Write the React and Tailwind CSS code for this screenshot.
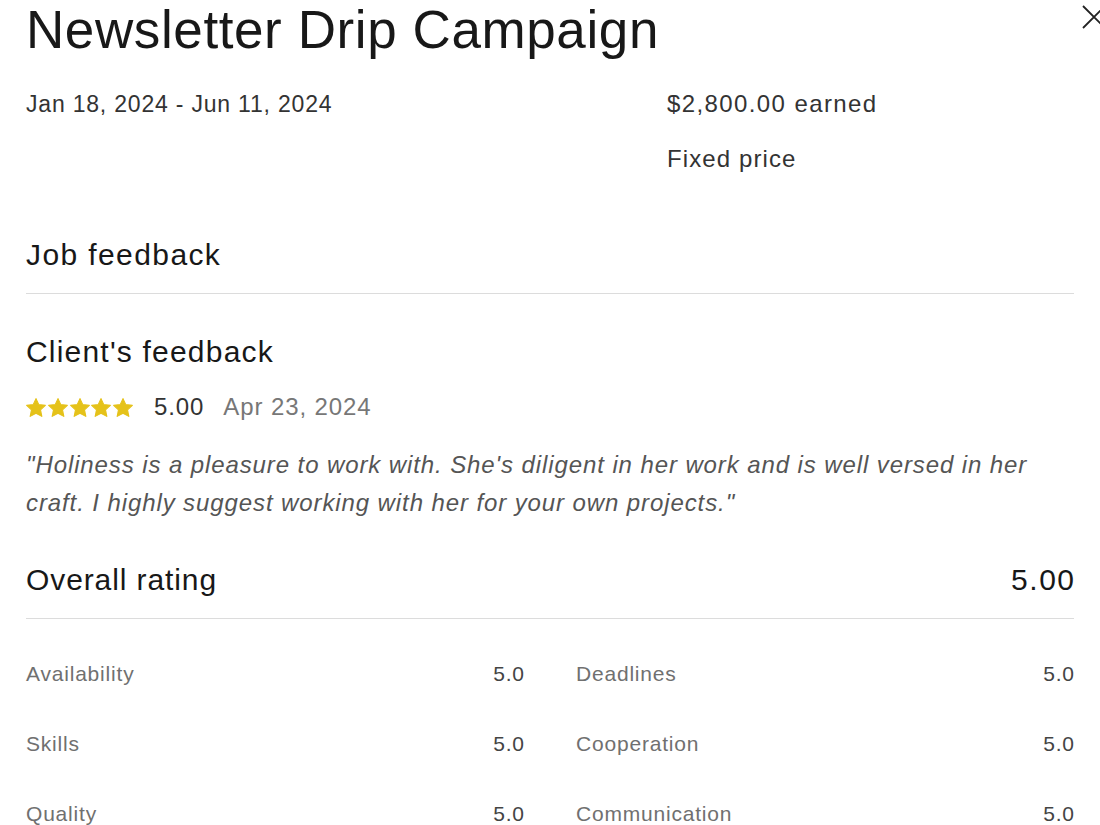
import React from "react";

const Star = () => (
  <svg viewBox="1.2 1.0 21.6 20.4" className="w-[20px] h-[19px]" fill="#e5c21a" stroke="#e5c21a" strokeWidth="1.2" strokeLinejoin="round">
    <path d="M12 1.6l3.05 6.5 7.05.8-5.22 4.85 1.4 7.05L12 17.3l-6.28 3.5 1.4-7.05L1.9 8.9l7.05-.8z" />
  </svg>
);

const rows = [
  ["Availability", "5.0", "Deadlines", "5.0"],
  ["Skills", "5.0", "Cooperation", "5.0"],
  ["Quality", "5.0", "Communication", "5.0"],
];

export default function App() {
  return (
    <div className="w-[1100px] h-[825px] overflow-hidden bg-white text-[#181818] relative" style={{ fontFamily: "'Liberation Sans', Arial, sans-serif" }}>
      <button className="absolute right-[-8px] top-[3px] text-[#222]">
        <svg viewBox="0 0 28 28" className="w-[28px] h-[28px]" stroke="currentColor" strokeWidth="1.8" fill="none">
          <path d="M3 3l22 22M25 3L3 25" />
        </svg>
      </button>
      <div className="px-[26px]">
        <h1 className="text-[53px] leading-[60px] font-normal tracking-[0.6px]">Newsletter Drip Campaign</h1>
        <div className="flex mt-[31px] text-[#333]">
          <div className="w-[641px] text-[23px] leading-[26px] tracking-[0.8px]">Jan 18, 2024 - Jun 11, 2024</div>
          <div className="flex flex-col gap-[29px] text-[24px] leading-[26px]">
            <div className="tracking-[1.4px]">$2,800.00 earned</div>
            <div className="tracking-[1.1px]">Fixed price</div>
          </div>
        </div>
        <div className="mt-[65px] text-[30px] leading-[36px] tracking-[1.4px] pb-[20px] border-b border-[#dcdcdc]">Job feedback</div>
        <div className="mt-[40px] text-[30px] leading-[36px] tracking-[1.2px]">Client's feedback</div>
        <div className="flex items-center mt-[24px] h-[26px] text-[24px] tracking-[0.9px]">
          <div className="flex gap-[1.75px]">
            <Star /><Star /><Star /><Star /><Star />
          </div>
          <span className="ml-[21px] text-[#333]">5.00</span>
          <span className="ml-[19px] text-[#777]">Apr 23, 2024</span>
        </div>
        <p className="mt-[26px] text-[24px] leading-[38px] italic text-[#555] tracking-[0.9px]">
          "Holiness is a pleasure to work with. She's diligent in her work and is well versed in her craft. I highly suggest working with her for your own projects."
        </p>
        <div className="mt-[40px] flex justify-between items-center text-[30px] leading-[36px] pb-[20px] border-b border-[#dcdcdc]">
          <span className="tracking-[0.9px]">Overall rating</span>
          <span className="tracking-[1.5px] mr-[-1.5px]">5.00</span>
        </div>
        <div className="grid grid-cols-2 gap-x-[52px] mt-[42px] gap-y-[44px] text-[21px] leading-[26px] tracking-[0.8px]">
          {rows.map((r, i) => (
            <React.Fragment key={i}>
              <div className="flex justify-between">
                <span className="text-[#707070]">{r[0]}</span>
                <span className="text-[#444] mr-[-0.8px]">{r[1]}</span>
              </div>
              <div className="flex justify-between">
                <span className="text-[#707070]">{r[2]}</span>
                <span className="text-[#444] mr-[-0.8px]">{r[3]}</span>
              </div>
            </React.Fragment>
          ))}
        </div>
      </div>
    </div>
  );
}
